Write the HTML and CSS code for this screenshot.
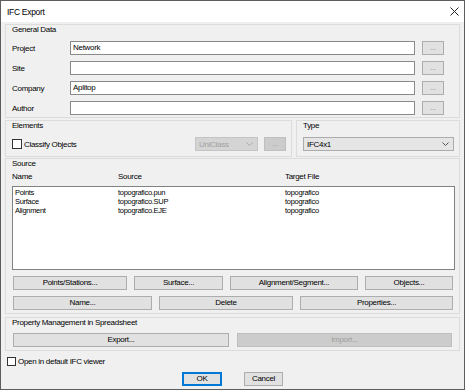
FILE: index.html
```html
<!DOCTYPE html>
<html lang="en">
<head>
    <meta charset="UTF-8">
    <title>IFC Export</title>
    <link rel="stylesheet" href="styles.css">
</head>
<body>
    <div class="window">
        <div class="titlebar">
            <span class="title">IFC Export</span>
            <svg class="close" width="9" height="9" viewBox="0 0 9 9">
                <path d="M0.5 0.5 L8.5 8.5 M8.5 0.5 L0.5 8.5" stroke="#222" stroke-width="1" fill="none"/>
            </svg>
        </div>

        <div class="content">
            <!-- General Data -->
            <div class="group general">
                <div class="group-title">General Data</div>
                <div class="field first">
                    <span class="field-label">Project</span>
                    <div class="textbox">Network</div>
                    <div class="btn dots">...</div>
                </div>
                <div class="field">
                    <span class="field-label">Site</span>
                    <div class="textbox"></div>
                    <div class="btn dots">...</div>
                </div>
                <div class="field">
                    <span class="field-label">Company</span>
                    <div class="textbox">Aplitop</div>
                    <div class="btn dots">...</div>
                </div>
                <div class="field">
                    <span class="field-label">Author</span>
                    <div class="textbox"></div>
                    <div class="btn dots">...</div>
                </div>
            </div>

            <div class="group-row">
                <div class="group elements">
                    <div class="group-title">Elements</div>
                    <div class="elements-row">
                        <label class="check">
                            <span class="checkbox"></span>
                            <span>Classify Objects</span>
                        </label>
                        <div class="select disabled">
                            <span>UniClass</span>
                            <svg width="7" height="4" viewBox="0 0 7 4"><path d="M0.5 0.5 L3.5 3.5 L6.5 0.5" stroke="#a8a8a8" fill="none"/></svg>
                        </div>
                        <div class="btn dots disabled">...</div>
                    </div>
                </div>
                <div class="group type">
                    <div class="group-title">Type</div>
                    <div class="select type-select">
                        <span>IFC4x1</span>
                        <svg width="7" height="4" viewBox="0 0 7 4"><path d="M0.5 0.5 L3.5 3.5 L6.5 0.5" stroke="#555" fill="none"/></svg>
                    </div>
                </div>
            </div>

            <!-- Source -->
            <div class="group source">
                <div class="group-title">Source</div>
                <div class="list-header">
                    <span class="col-name">Name</span>
                    <span class="col-source">Source</span>
                    <span>Target File</span>
                </div>
                <div class="listbox">
                    <div class="list-item">
                        <span class="item-name">Points</span>
                        <span class="item-source">topografico.pun</span>
                        <span>topografico</span>
                    </div>
                    <div class="list-item">
                        <span class="item-name">Surface</span>
                        <span class="item-source">topografico.SUP</span>
                        <span>topografico</span>
                    </div>
                    <div class="list-item">
                        <span class="item-name">Alignment</span>
                        <span class="item-source">topografico.EJE</span>
                        <span>topografico</span>
                    </div>
                </div>
                <div class="btn-row row-one">
                    <div class="btn w-points">Points/Stations...</div>
                    <div class="btn w-surface">Surface...</div>
                    <div class="btn w-align">Alignment/Segment...</div>
                    <div class="btn w-objects">Objects...</div>
                </div>
                <div class="btn-row row-two">
                    <div class="btn w-name">Name...</div>
                    <div class="btn w-delete">Delete</div>
                    <div class="btn w-props">Properties...</div>
                </div>
            </div>

            <!-- Property Management -->
            <div class="group props">
                <div class="group-title">Property Management in Spreadsheet</div>
                <div class="btn-row row-props">
                    <div class="btn w-export">Export...</div>
                    <div class="btn w-import disabled">Import...</div>
                </div>
            </div>

            <label class="check viewer">
                <span class="checkbox small"></span>
                <span>Open in default IFC viewer</span>
            </label>

            <div class="dialog-buttons">
                <div class="btn ok">OK</div>
                <div class="btn cancel">Cancel</div>
            </div>
        </div>
    </div>
</body>
</html>
```

FILE: styles.css
```css
body {
    margin: 0;
    font-family: "Liberation Sans", Arial, sans-serif;
    font-size: 8px;
    letter-spacing: -0.3px;
    color: #000;
    background: #f0f0f0;
}

.window {
    width: 465px;
    height: 390px;
    box-sizing: border-box;
    border: 1px solid #5d5d5d;
    background: #f0f0f0;
    display: flex;
    flex-direction: column;
}

.titlebar {
    height: 21px;
    flex: none;
    background: #fff;
    display: flex;
    align-items: center;
    justify-content: space-between;
    padding: 0 5px 0 6px;
}

.title {
    font-size: 8.5px;
}

.content {
    padding: 2px 4px 0 4px;
}

.group {
    border: 1px solid #dcdcdc;
    padding: 0 5px 2px 6px;
}

.group-title {
    height: 9px;
    line-height: 9px;
}

/* general data */
.field {
    display: flex;
    align-items: center;
    height: 14px;
    margin-top: 6px;
}

.field.first {
    margin-top: 7px;
}

.field-label {
    width: 58px;
    flex: none;
}

.textbox {
    width: 345px;
    height: 14px;
    box-sizing: border-box;
    border: 1px solid #8a8a8a;
    background: #fff;
    padding-left: 2px;
    line-height: 12px;
}

.btn {
    height: 14px;
    box-sizing: border-box;
    border: 1px solid #adadad;
    background: #e1e1e1;
    text-align: center;
    line-height: 12px;
    flex: none;
}

.btn.disabled {
    background: #cccccc;
    border-color: #bfbfbf;
    color: #a0a0a0;
}

.dots {
    width: 22px;
    margin-left: 7px;
    color: #8a8a8a;
}

/* elements / type */
.group-row {
    display: flex;
    gap: 4px;
    margin-top: 2px;
}

.elements {
    width: 287px;
    box-sizing: border-box;
    padding-bottom: 5px;
}

.type {
    flex: 1;
    padding-bottom: 5px;
}

.elements-row {
    display: flex;
    align-items: center;
    height: 14px;
    margin-top: 7px;
}

.check {
    display: flex;
    align-items: center;
    flex: 1;
}

.checkbox {
    width: 10px;
    height: 10px;
    box-sizing: border-box;
    border: 1px solid #333;
    background: #fff;
    margin-right: 2px;
}

.checkbox.small {
    width: 9px;
    height: 9px;
}

.select {
    height: 14px;
    box-sizing: border-box;
    border: 1px solid #acacac;
    background: #e5e5e5;
    display: flex;
    align-items: center;
    justify-content: space-between;
    padding: 0 4px 0 3px;
}

.select.disabled {
    width: 63px;
    background: #d4d4d4;
    border-color: #c4c4c4;
    color: #a0a0a0;
}

.elements .dots {
    margin-left: 6px;
}

.type-select {
    width: 151px;
    margin-top: 7px;
}

/* source */
.source {
    margin-top: 1px;
    padding-right: 4px;
    padding-bottom: 3px;
}

.list-header {
    display: flex;
    height: 9px;
    line-height: 9px;
    margin-top: 4px;
}

.col-name {
    width: 106px;
}

.col-source {
    width: 167px;
}

.listbox {
    height: 84px;
    box-sizing: border-box;
    margin-top: 5px;
    border: 1px solid #828282;
    background: #fff;
    padding: 1px 0 0 2px;
}

.list-item {
    display: flex;
    font-size: 7.5px;
    height: 9px;
    line-height: 9px;
}

.item-name {
    width: 103px;
}

.item-source {
    width: 167px;
}

.btn-row {
    display: flex;
    gap: 7px;
    margin-left: 1px;
}

.row-one {
    margin-top: 6px;
}

.row-two {
    margin-top: 6px;
}

.w-points { width: 114px; }
.w-surface { width: 89px; }
.w-align { width: 128px; }
.w-objects { width: 88px; }
.w-name { width: 139px; }
.w-delete { width: 134px; }
.w-props { width: 153px; }

/* property management */
.props {
    margin-top: 3px;
    padding-bottom: 3px;
}

.row-props {
    gap: 8px;
    margin-top: 6px;
}

.w-export { width: 216px; }
.w-import { width: 215px; }

.viewer {
    margin: 6px 0 0 2px;
    height: 9px;
}

.dialog-buttons {
    display: flex;
    justify-content: center;
    gap: 22px;
    margin-top: 6px;
}

.ok {
    width: 40px;
    border-color: #0078d7;
    box-shadow: inset 0 0 0 1px #0078d7;
}

.cancel {
    width: 39px;
}
```
